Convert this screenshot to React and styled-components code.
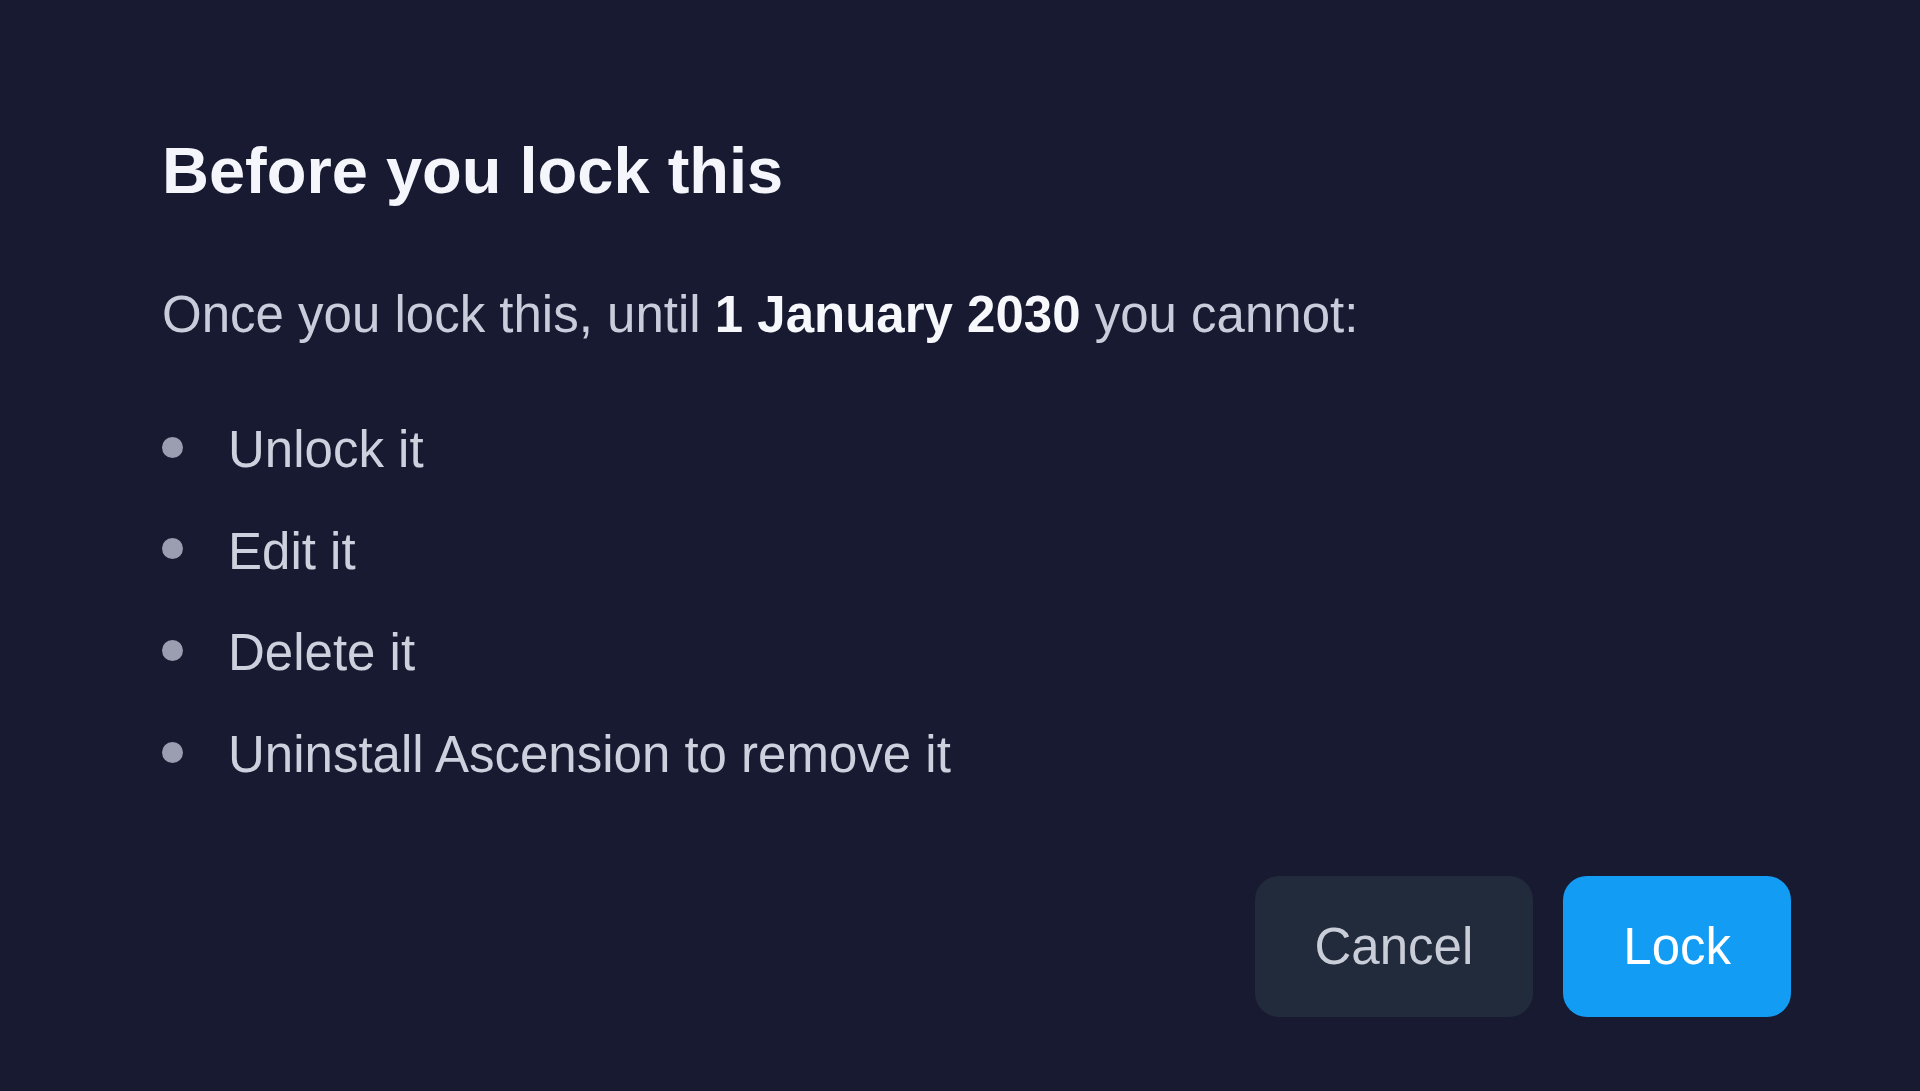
import React from "react";
import styled, { createGlobalStyle } from "styled-components";

const GlobalStyle = createGlobalStyle`
  html, body {
    margin: 0;
    padding: 0;
    background-color: #181a31;
  }
  body {
    font-family: "Liberation Sans", Arial, sans-serif;
  }
`;

const Page = styled.div`
  width: 1920px;
  height: 1091px;
  box-sizing: border-box;
  background-color: #181a31;
  padding: 132px 129px 0 162px;
  display: flex;
  flex-direction: column;
`;

const Title = styled.h1`
  margin: 0;
  font-size: 65px;
  line-height: 78px;
  font-weight: 700;
  color: #f4f6fb;
`;

const Text = styled.p`
  margin: 74px 0 0;
  font-size: 51px;
  line-height: 61px;
  color: #c9cddb;

  strong {
    font-weight: 700;
    color: #f7f8fc;
  }
`;

const List = styled.ul`
  list-style: none;
  margin: 74px 0 0;
  padding: 0;
  display: flex;
  flex-direction: column;
  gap: 40.7px;
`;

const Item = styled.li`
  display: flex;
  align-items: center;
  gap: 45px;
  font-size: 51px;
  line-height: 61px;
  color: #cdd1de;
`;

const Dot = styled.span`
  width: 21px;
  height: 21px;
  border-radius: 50%;
  background-color: #9b9eb1;
  margin-bottom: 5px;
  flex-shrink: 0;
`;

const Actions = styled.div`
  margin-top: 91px;
  display: flex;
  justify-content: flex-end;
  gap: 30px;
`;

const Button = styled.button`
  height: 141px;
  padding: 0 60px;
  border: none;
  border-radius: 24px;
  font-family: "Liberation Sans", Arial, sans-serif;
  font-size: 51px;
  cursor: pointer;
  background-color: ${(props) => (props.primary ? "#139cf3" : "#222b3c")};
  color: ${(props) => (props.primary ? "#ffffff" : "#c9cdd8")};
`;

const items = [
  "Unlock it",
  "Edit it",
  "Delete it",
  "Uninstall Ascension to remove it",
];

const App = () => {
  return (
    <>
      <GlobalStyle />
      <Page>
        <Title>Before you lock this</Title>
        <Text>
          Once you lock this, until <strong>1 January 2030</strong> you cannot:
        </Text>
        <List>
          {items.map((item) => (
            <Item key={item}>
              <Dot />
              {item}
            </Item>
          ))}
        </List>
        <Actions>
          <Button>Cancel</Button>
          <Button primary>Lock</Button>
        </Actions>
      </Page>
    </>
  );
};

export default App;
